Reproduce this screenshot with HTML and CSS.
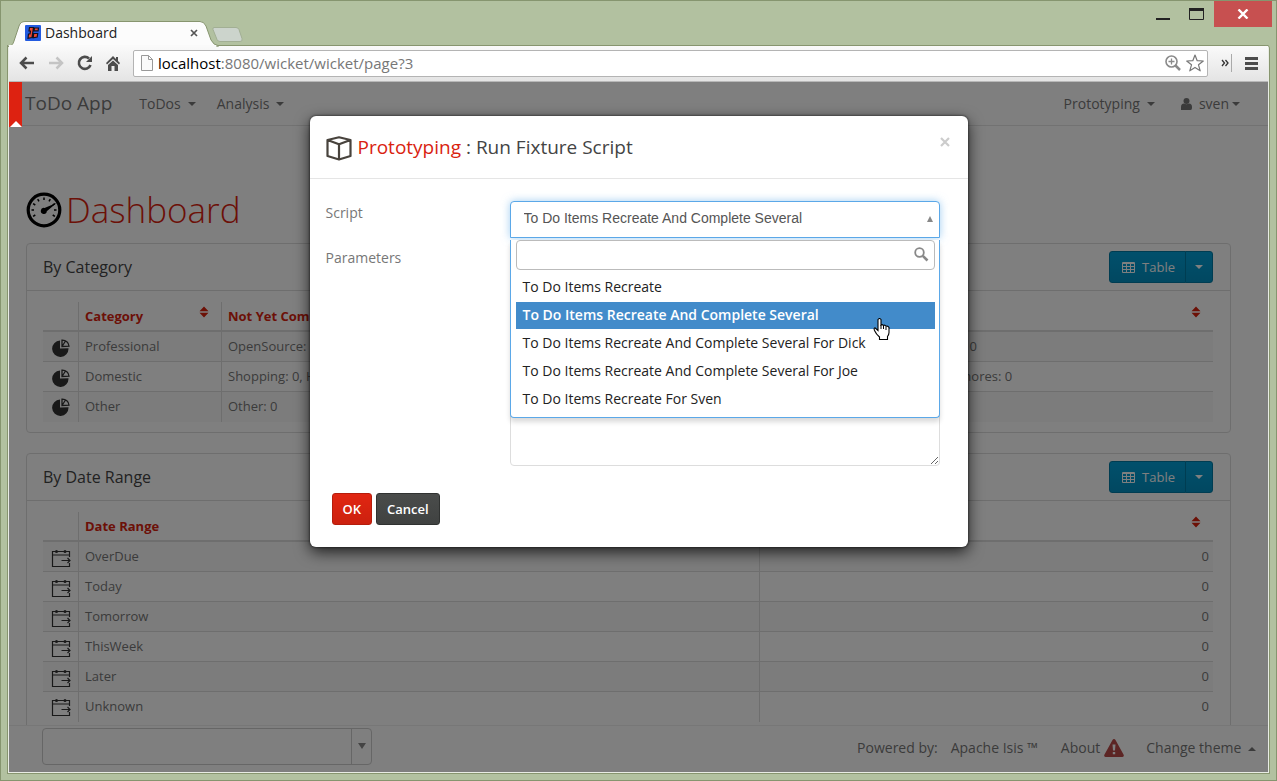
FILE: index.html
```html
<!DOCTYPE html>
<html lang="en">
<head>
<meta charset="utf-8">
<title>Dashboard</title>
<link rel="stylesheet" href="styles.css">
</head>
<body>
<svg class="defs" aria-hidden="true">
  <symbol id="pie" viewBox="0 0 18 18">
    <path fill="currentColor" d="M8 1.5V9.500l8.500-.3A8.200 8.200 0 1 1 8 1.500z"/>
    <path fill="none" stroke="currentColor" stroke-width="1.300" d="M10 1.200V7.500l7-.3C16.800 3.800 13.800 1 10 1.200zM10 7.500L13.500 2"/>
  </symbol>
  <symbol id="calendar" viewBox="0 0 20 20">
    <path fill="none" stroke="currentColor" stroke-width="1.200" d="M18.500 9V3.500H1.500v15h17V15M1.500 7h17M10.500 12.500h8.500M16.500 10l2.500 2.500-2.500 2.500"/>
    <circle cx="5.500" cy="3.500" r="1.500" fill="currentColor"/><circle cx="14" cy="3.500" r="1.500" fill="currentColor"/>
  </symbol>
  <symbol id="sort" viewBox="0 0 10 12">
    <path fill="currentColor" d="M5 .5L9.500 5.300H.5zM5 11.500L.5 6.700h9z"/>
  </symbol>
  <symbol id="grid" viewBox="0 0 13 11">
    <path fill="currentColor" fill-rule="evenodd" d="M1 0h11q1 0 1 1v9q0 1-1 1H1q-1 0-1-1V1q0-1 1-1zM1 2v2h3V2zM5 2v2h3V2zM9 2v2h3V2zM1 5v2h3V5zM5 5v2h3V5zM9 5v2h3V5zM1 8v2h3V8zM5 8v2h3V8zM9 8v2h3V8z"/>
  </symbol>
</svg>
<div class="window">
  <header class="titlebar">
    <div class="tab">
      <svg class="tab-shape" width="236" height="26" viewBox="0 0 236 26" aria-hidden="true">
        <path d="M0 25.500C4 25 5 23 6 20L11 5Q12.500 .5 17 .5H192Q196 .5 198 5L203 19Q206 24.500 210 24.500V26H0z" fill="#fcfcfc" stroke="#87956f"/>
        <path d="M1 24h207v2H1z" fill="#fafafa"/>
        <path d="M206 6.500h22q2 0 3 2l3 9q1 3-2 3h-20q-2 0-3-2l-4-10q-.5-2 1-2z" fill="#ccd4cc" stroke="#a2af94"/>
      </svg>
      <svg class="favicon" width="16" height="16" viewBox="0 0 16 16" aria-hidden="true"><rect width="16" height="16" rx="1" fill="#235be0"/><path d="M4.500 2.500h4l-1.500 10-4 .8.500-4.300h1.500l.5-3h-1.500zM9.500 3h4l-.4 2.800H9zM8.700 8.500h4l-.5 3.500-4 .8z" fill="#ee4830" stroke="#101020" stroke-width="1.200"/></svg>
      <span class="tab-title">Dashboard</span>
      <button class="plain" aria-label="Close tab"><svg width="8" height="8" viewBox="0 0 8 8"><path d="M1 1l6 6M7 1L1 7" stroke="#555" stroke-width="1.700"/></svg></button>
    </div>
    <div class="win-buttons">
      <button class="plain win-min" aria-label="Minimize"><svg width="14" height="14" viewBox="0 0 14 14"><path d="M0 12h14v2H0z" fill="#222"/></svg></button>
      <button class="plain win-max" aria-label="Maximize"><svg width="15" height="12" viewBox="0 0 15 12"><path d="M.5 1.500h14v10H.5z" fill="none" stroke="#222"/><path d="M0 0h15v3H0z" fill="#222"/></svg></button>
      <button class="win-close" aria-label="Close window"><svg width="12" height="10" viewBox="0 0 12 10"><path d="M1.500 .5l9 9M10.500 .5l-9 9" stroke="#fff" stroke-width="2.400"/></svg></button>
    </div>
  </header>
  <div class="browser">
    <div class="toolbar">
      <button class="plain" aria-label="Back"><svg width="16" height="14" viewBox="0 0 16 14"><path d="M7.500 1.500L2 7l5.500 5.500M2 7h13" fill="none" stroke="#4c4c4c" stroke-width="2.500"/></svg></button>
      <button class="plain" aria-label="Forward"><svg width="16" height="14" viewBox="0 0 16 14"><path d="M8.500 1.500L14 7l-5.500 5.500M14 7H1" fill="none" stroke="#c4c4c4" stroke-width="2.500"/></svg></button>
      <button class="plain" aria-label="Reload"><svg width="16" height="16" viewBox="0 0 16 16"><path d="M13.500 10A6 6 0 1 1 12 3.500" fill="none" stroke="#4c4c4c" stroke-width="2.600"/><path d="M15 1v6H9z" fill="#4c4c4c"/></svg></button>
      <button class="plain" aria-label="Home"><svg width="14" height="15" viewBox="0 0 14 15"><path d="M7 0L0 7l1 1.500L7 3l6 5.500L14 7l-2-2V1h-2v2zM7 4.500L2 9v6h3.500v-5h3v5H12V9z" fill="#4c4c4c"/></svg></button>
      <div class="address">
        <svg width="12" height="16" viewBox="0 0 12 16" aria-hidden="true"><path d="M.5 .5h7l4 4v11H.5zM7.500 .5v4h4" fill="#fafafa" stroke="#999"/></svg>
        <a class="url" href="#"><b>localhost</b>:8080/wicket/wicket/page?3</a>
        <button class="plain" aria-label="Zoom"><svg width="16" height="16" viewBox="0 0 16 16"><circle cx="6.500" cy="6.500" r="5.500" fill="none" stroke="#8a8a8a" stroke-width="1.600"/><path d="M3.500 6.500h6M6.500 3.500v6" stroke="#8a8a8a" stroke-width="1.300"/><path d="M10.500 10.500L15 15" stroke="#8a8a8a" stroke-width="2.500"/></svg></button>
        <button class="plain" aria-label="Bookmark"><svg width="18" height="18" viewBox="0 0 18 18"><path d="M9 1l2.200 5.700 6.100.3-4.800 3.800 1.700 6L9 13.400l-5.200 3.400 1.700-6L.7 7l6.100-.3z" fill="#fff" stroke="#777" stroke-width="1.200" stroke-linejoin="round"/></svg></button>
      </div>
      <button class="plain" aria-label="More bookmarks"><svg width="8" height="8" viewBox="0 0 8 8"><path d="M1 1l2.500 3L1 7M4.500 1L7 4 4.500 7" fill="none" stroke="#333" stroke-width="1.300"/></svg></button>
      <span class="divider"></span>
      <button class="plain" aria-label="Menu"><svg width="13" height="13" viewBox="0 0 13 13"><path d="M0 1.500h13M0 6.500h13M0 11.500h13" stroke="#4c4c4c" stroke-width="3"/></svg></button>
    </div>
    <div class="page">
      <nav class="navbar">
        <a class="brand" href="#">ToDo App</a>
        <a class="nav-link" href="#">ToDos <i class="caret"></i></a>
        <a class="nav-link" href="#">Analysis <i class="caret"></i></a>
        <span class="spacer"></span>
        <a class="nav-link" href="#">Prototyping <i class="caret"></i></a>
        <a class="nav-link user" href="#"><svg width="11" height="12" viewBox="0 0 11 12" aria-hidden="true"><circle cx="5.500" cy="3" r="3" fill="currentColor"/><path d="M0 12V9q0-3.500 3-3.500 2.500 1.500 5 0 3 0 3 3.500v1q0 2-1.500 2z" fill="currentColor"/></svg>sven<i class="caret"></i></a>
      </nav>
      <main class="content">
        <h1 class="page-title">
          <svg width="36" height="36" viewBox="0 0 36 36" aria-hidden="true"><circle cx="18" cy="18" r="15.800" fill="none" stroke="#000" stroke-width="3.200"/><path d="M9.300 23l-2.200 1.300M8 18H5.500M9.300 13L7.100 11.700M13 9.300L11.700 7.100M18 8V5.500M23 9.300l1.300-2.200M26.700 13l2.200-1.300M28 18h2.500M26.700 23l2.200 1.300" stroke="#000" stroke-width="1.500"/><path d="M30.500 11L20.800 19.200a3 3 0 1 1-2.300-3.200z" fill="#000"/></svg>
          Dashboard
        </h1>
        <section class="panel">
          <div class="panel-heading">
            <h2>By Category</h2>
            <div class="btn-group"><button class="btn-info"><svg width="13" height="11"><use href="#grid"/></svg>Table</button><button class="btn-info toggle" aria-label="Table options"><i class="caret"></i></button></div>
          </div>
          <div class="panel-body">
            <table class="grid">
              <colgroup><col class="c-icon"><col class="c-category"><col class="c-half"><col></colgroup>
              <thead><tr><th></th><th><span class="th-inner">Category<svg width="10" height="12"><use href="#sort"/></svg></span></th><th>Not Yet Complete</th><th class="last"><span class="th-inner">Complete<svg width="10" height="12"><use href="#sort"/></svg></span></th></tr></thead>
              <tbody>
                <tr><td><svg width="18" height="18"><use href="#pie"/></svg></td><td>Professional</td><td>OpenSource: 0, Consulting: 0, Education: 0</td><td>OpenSource: 0, Consulting: 0, Education: 0</td></tr>
                <tr><td><svg width="18" height="18"><use href="#pie"/></svg></td><td>Domestic</td><td>Shopping: 0, Housework: 0, Garden: 0, Chores: 0</td><td>Shopping: 0, Housework: 0, Garden: 0, Chores: 0</td></tr>
                <tr><td><svg width="18" height="18"><use href="#pie"/></svg></td><td>Other</td><td>Other: 0</td><td>Other: 0</td></tr>
              </tbody>
            </table>
          </div>
        </section>
        <section class="panel">
          <div class="panel-heading">
            <h2>By Date Range</h2>
            <div class="btn-group"><button class="btn-info"><svg width="13" height="11"><use href="#grid"/></svg>Table</button><button class="btn-info toggle" aria-label="Table options"><i class="caret"></i></button></div>
          </div>
          <div class="panel-body">
            <table class="grid">
              <colgroup><col class="c-icon"><col class="c-range"><col></colgroup>
              <thead><tr><th></th><th>Date Range</th><th class="last"><span class="th-inner">Count<svg width="10" height="12"><use href="#sort"/></svg></span></th></tr></thead>
              <tbody>
                <tr><td><svg width="20" height="20"><use href="#calendar"/></svg></td><td>OverDue</td><td class="num">0</td></tr>
                <tr><td><svg width="20" height="20"><use href="#calendar"/></svg></td><td>Today</td><td class="num">0</td></tr>
                <tr><td><svg width="20" height="20"><use href="#calendar"/></svg></td><td>Tomorrow</td><td class="num">0</td></tr>
                <tr><td><svg width="20" height="20"><use href="#calendar"/></svg></td><td>ThisWeek</td><td class="num">0</td></tr>
                <tr><td><svg width="20" height="20"><use href="#calendar"/></svg></td><td>Later</td><td class="num">0</td></tr>
                <tr><td><svg width="20" height="20"><use href="#calendar"/></svg></td><td>Unknown</td><td class="num">0</td></tr>
              </tbody>
            </table>
          </div>
        </section>
      </main>
      <footer class="footer">
        <div class="bookmarks"><select aria-label="Recent pages"></select><span class="arrow"><svg width="8" height="6" viewBox="0 0 8 6"><path d="M0 0h8L4 6z" fill="#888"/></svg></span></div>
        <span class="spacer"></span>
        <span class="powered">Powered by:</span>
        <a class="isis" href="#">Apache Isis ™</a>
        <a class="about" href="#">About <svg width="20" height="18" viewBox="0 0 20 18" aria-hidden="true"><path d="M10 0q1 0 1.500 1l8 14.500q1 2-1 2.500H1.500q-2-.5-1-2.500L8.500 1Q9 0 10 0z" fill="#b94a48"/><path d="M8.500 5.500h3l-.5 6H9zM8.800 13h2.400v2.300H8.800z" fill="#fff"/></svg></a>
        <a href="#">Change theme <i class="caret up"></i></a>
      </footer>
      <div class="backdrop">
        <div class="modal" role="dialog" aria-labelledby="dialog-title">
          <div class="modal-header">
            <svg width="26" height="25" viewBox="0 0 26 25" aria-hidden="true"><path d="M13 1.300L24.500 4v16L13 23.500 1.500 20V4zM1.500 4L13 8.300 24.500 4M13 8.300v15" fill="none" stroke="#48433d" stroke-width="2.200" stroke-linejoin="round"/></svg>
            <h2 id="dialog-title"><em>Prototyping</em> : Run Fixture Script</h2>
            <button class="plain close" aria-label="Close"><svg width="10" height="10" viewBox="0 0 10 10"><path d="M1 1l8 8M9 1L1 9" stroke="#ccc" stroke-width="2.200"/></svg></button>
          </div>
          <form class="modal-body">
            <div class="field">
              <label for="script">Script</label>
              <div class="control">
                <select id="script" class="script-select"><option>To Do Items Recreate And Complete Several</option></select>
                <svg class="select-arrow" width="6" height="6" viewBox="0 0 6 6" aria-hidden="true"><path d="M3 0l3 6H0z" fill="#888"/></svg>
                <div class="dropdown">
                  <div class="search"><input type="text" aria-label="Search scripts"><svg width="15" height="15" viewBox="0 0 15 15" aria-hidden="true"><circle cx="5.500" cy="5.500" r="4.300" fill="none" stroke="#888" stroke-width="1.800"/><path d="M8.800 8.800l4.700 4.700" stroke="#888" stroke-width="2.600"/></svg></div>
                  <ul role="listbox" aria-label="Script">
                    <li role="option">To Do Items Recreate</li>
                    <li role="option" class="active" aria-selected="true">To Do Items Recreate And Complete Several
                      <svg class="cursor" width="17" height="23" viewBox="0 0 17 23" aria-hidden="true"><path d="M5 1.500q1.500-2 3 0V7q1.200-1 2.500.5 1.500-1 2.500.8 2-.8 3 1.200v5q0 2-1.500 4v3H6.500v-2.500Q3 16 1.500 12.500.5 10 2 9.800L5 12.500z" fill="#fff" stroke="#000" stroke-width="1.100"/><path d="M8 7v4M10.500 8v3M13 9v3" stroke="#000"/></svg>
                    </li>
                    <li role="option">To Do Items Recreate And Complete Several For Dick</li>
                    <li role="option">To Do Items Recreate And Complete Several For Joe</li>
                    <li role="option">To Do Items Recreate For Sven</li>
                  </ul>
                </div>
              </div>
            </div>
            <div class="field">
              <label for="parameters">Parameters</label>
              <div class="control"><textarea id="parameters"></textarea></div>
            </div>
            <div class="actions"><button type="button" class="btn ok">OK</button><button type="button" class="btn cancel">Cancel</button></div>
          </form>
        </div>
      </div>
      <svg class="ribbon" width="13" height="45" viewBox="0 0 13 45" aria-hidden="true"><path d="M0 0h13v45H0z" fill="#dd2211"/><path d="M1 45l6-6 6 6z" fill="#fff"/></svg>
    </div>
  </div>
</div>
</body>
</html>
```

FILE: styles.css
```css
* { box-sizing: border-box; }
body { margin: 0; font-family: "Open Sans", "Noto Sans", sans-serif; font-size: 14px; line-height: 20px; color: #777; }
button, input, select, textarea { font: inherit; }
a { color: inherit; text-decoration: none; }
h1, h2 { margin: 0; font-weight: 400; }
svg { display: block; flex: none; }
.defs { position: absolute; width: 0; height: 0; }
.plain { display: flex; padding: 0; border: 0; background: none; }
.spacer { flex: 1; }

.window { display: flex; flex-direction: column; height: 100vh; padding: 0 7px 7px; background: #b2c1a0; border: 1px solid #86956f; }
.titlebar { display: flex; justify-content: space-between; height: 44px; }
.tab { position: relative; display: flex; align-items: center; width: 190px; margin-top: 20px; padding-left: 17px; gap: 4px; color: #222; }
.tab > * { position: relative; }
.tab .tab-shape { position: absolute; left: 0; top: 0; z-index: 1; }
.favicon, .tab-title, .tab .plain { z-index: 2; }
.tab-title { flex: 1; }
.win-buttons { display: flex; align-items: flex-start; }
.win-min { margin: 5px 19px 0 0; }
.win-max { margin: 7px 10px 0 0; }
.win-close { display: flex; align-items: center; justify-content: center; width: 58px; height: 26px; margin-right: -3px; padding: 0; border: 0; background: #c75050; }

.browser { flex: 1; min-height: 0; display: flex; flex-direction: column; background: #fff; border: 1px solid #e8ece4; border-top-color: #87956f; border-radius: 0 4px 0 0; box-shadow: 0 0 0 1px #87956f; clip-path: inset(0 -1px -1px -1px); }
.toolbar { display: flex; align-items: center; height: 36px; padding: 0 10px 1px; gap: 13px; background: linear-gradient(#fafafa, #e4e4e4); border-bottom: 1px solid #b8b8b8; }
.address { flex: 1; display: flex; align-items: center; gap: 5px; height: 27px; padding: 0 3px 0 7px; background: #fff; border: 1px solid #b4b4b4; border-radius: 2px; }
.url { flex: 1; font-size: 15px; color: #777; }
.url b { font-weight: 400; color: #000; }
.divider { width: 1px; height: 18px; margin-left: -11px; background: #aaa; }

.page { position: relative; flex: 1; min-height: 0; display: flex; flex-direction: column; background: #fff; overflow: hidden; }
.navbar { display: flex; align-items: center; height: 44px; flex: none; padding: 0 28px 0 16px; border-bottom: 1px solid #e4e4e4; }
.brand { margin-right: 27px; padding-bottom: 2px; font-size: 19px; }
.nav-link { display: flex; align-items: center; gap: 7px; margin-right: 21px; }
.user { gap: 0; margin-right: 0; padding-left: 5px; }
.user svg { margin-right: 7px; }
.user .caret { margin-left: 3px; }
.caret { display: inline-block; border: 4px solid transparent; border-top-color: currentColor; border-bottom: 0; }
.caret.up { border-top: 0; border-bottom: 4px solid currentColor; margin-left: 3px; vertical-align: 2px; }

.content { flex: 1; min-height: 0; overflow: hidden; padding: 64px 37px 0 17px; }
.page-title { display: flex; align-items: center; gap: 4px; height: 39px; margin-bottom: 14px; font-size: 35px; font-weight: 300; color: #d9230f; }
.panel { margin-bottom: 20px; border: 1px solid #ddd; border-radius: 4px; }
.panel-heading { display: flex; align-items: center; justify-content: space-between; height: 47px; padding: 0 17px 0 16px; border-bottom: 1px solid #ddd; }
.panel-heading h2 { font-size: 16px; color: #444; }
.btn-group { display: flex; }
.btn-info { display: flex; align-items: center; gap: 7px; height: 32px; padding: 0 10px 0 12px; font-size: 13px; color: #fff; background: linear-gradient(#02a0d8, #0290c2); border: 1px solid #017aa5; border-radius: 3px 0 0 3px; }
.btn-info.toggle { padding: 0 9px; margin-left: -1px; border-radius: 0 3px 3px 0; }
.panel-body { padding: 11px 17px 10px 16px; }
.grid { width: 100%; table-layout: fixed; border-collapse: separate; border-spacing: 0; font-size: 13px; }
.c-icon { width: 36px; }
.c-category { width: 143px; }
.c-half { width: 493px; }
.c-range { width: 681px; }
.grid th { height: 30px; padding: 0 6px; text-align: left; font-weight: 700; color: #d9230f; border-bottom: 2px solid #ddd; border-right: 1px solid #ddd; white-space: nowrap; }
.grid td { height: 30px; padding: 0 6px 1px; border-bottom: 1px solid #ddd; border-right: 1px solid #ddd; white-space: nowrap; overflow: hidden; }
.grid th:last-child, .grid td:last-child { border-right: 0; }
.grid tbody tr:last-child td { border-bottom: 0; padding-bottom: 2px; }
.grid tbody tr:nth-child(odd) td { background: #f9f9f9; }
.grid tbody td:first-child { padding: 2px 0 0; color: #333; }
.grid td svg { margin: 0 auto; }
.th-inner { display: flex; justify-content: space-between; padding-right: 6px; }
.grid td.num { text-align: right; padding-right: 4px; }

.footer { flex: none; display: flex; align-items: center; height: 47px; padding: 0 12px 2px 33px; border-top: 1px solid #eee; background: #fff; }
.bookmarks { display: flex; width: 330px; height: 37px; margin-bottom: 4px; border: 1px solid #ccc; border-radius: 4px; }
.bookmarks select { flex: 1; appearance: none; border: 0; background: none; }
.arrow { display: flex; align-items: center; justify-content: center; width: 20px; border-left: 1px solid #ccc; }
.powered { margin-right: 13px; }
.isis { margin-right: 23px; }
.about { display: flex; align-items: center; gap: 4px; margin-right: 22px; }

.backdrop { position: absolute; inset: 0; display: flex; justify-content: center; align-items: flex-start; padding-top: 34px; background: rgba(0, 0, 0, .5); }
.ribbon { position: absolute; left: 0; top: 0; }
.modal { width: 658px; max-width: 100%; background: #fff; border-radius: 6px; box-shadow: 0 5px 15px rgba(0, 0, 0, .75), 0 0 2px 1px rgba(0, 0, 0, .35); }
.modal-header { display: flex; align-items: center; height: 63px; padding: 0 18px 0 16px; gap: 6px; border-bottom: 1px solid #e5e5e5; }
.modal-header > svg { margin-top: 3px; }
.modal-header h2 { flex: 1; font-size: 19px; color: #444; }
.modal-header em { font-style: normal; color: #d9230f; }
.close { margin-bottom: 10px; }
.modal-body { padding: 22px 28px 22px 16px; }
.field { display: flex; margin-bottom: 8px; }
.field label { width: 184px; padding-top: 2px; }
.control { position: relative; flex: 1; }
.script-select { display: block; width: 100%; height: 37px; padding: 0 13px 3px; appearance: none; font-family: "Liberation Sans", Arial, sans-serif; font-size: 14px; color: #555; background: #fff; border: 1px solid #5ba8e8; border-radius: 4px 4px 0 0; box-shadow: 0 0 8px rgba(102, 175, 233, .6); }
.select-arrow { position: absolute; right: 7px; top: 15px; }
.dropdown { position: absolute; top: 39px; left: 0; right: 0; z-index: 2; padding: 0 4px 4px 5px; background: #fff; border: 1px solid #5ba8e8; border-top: 0; border-radius: 0 0 4px 4px; box-shadow: 0 4px 5px rgba(0, 0, 0, .15); }
.search { position: relative; }
.search input { display: block; width: 100%; height: 30px; border: 1px solid #bbb; border-radius: 4px; background: #fff; }
.search svg { position: absolute; right: 6px; top: 7px; }
.dropdown ul { display: grid; gap: 1px; margin: 4px 0 0; padding: 0; list-style: none; }
.dropdown li { position: relative; height: 27px; padding: 3px 7px; color: #222; white-space: nowrap; }
.dropdown .active { font-weight: 600; color: #fff; background: #428bca; z-index: 1; }
.cursor { position: absolute; right: 45px; top: 16px; }
.field textarea { display: block; width: 100%; height: 220px; border: 1px solid #ddd; border-radius: 4px; resize: vertical; }
.actions { display: flex; gap: 4px; margin-top: 27px; padding-left: 6px; }
.btn { height: 32px; padding: 0 10px; font-size: 13px; font-weight: 600; color: #fff; border-radius: 3px; }
.ok { background: linear-gradient(#e12612, #cc210f); border: 1px solid #b51d0c; }
.cancel { background: linear-gradient(#4a4c4b, #404241); border: 1px solid #303231; }
```
